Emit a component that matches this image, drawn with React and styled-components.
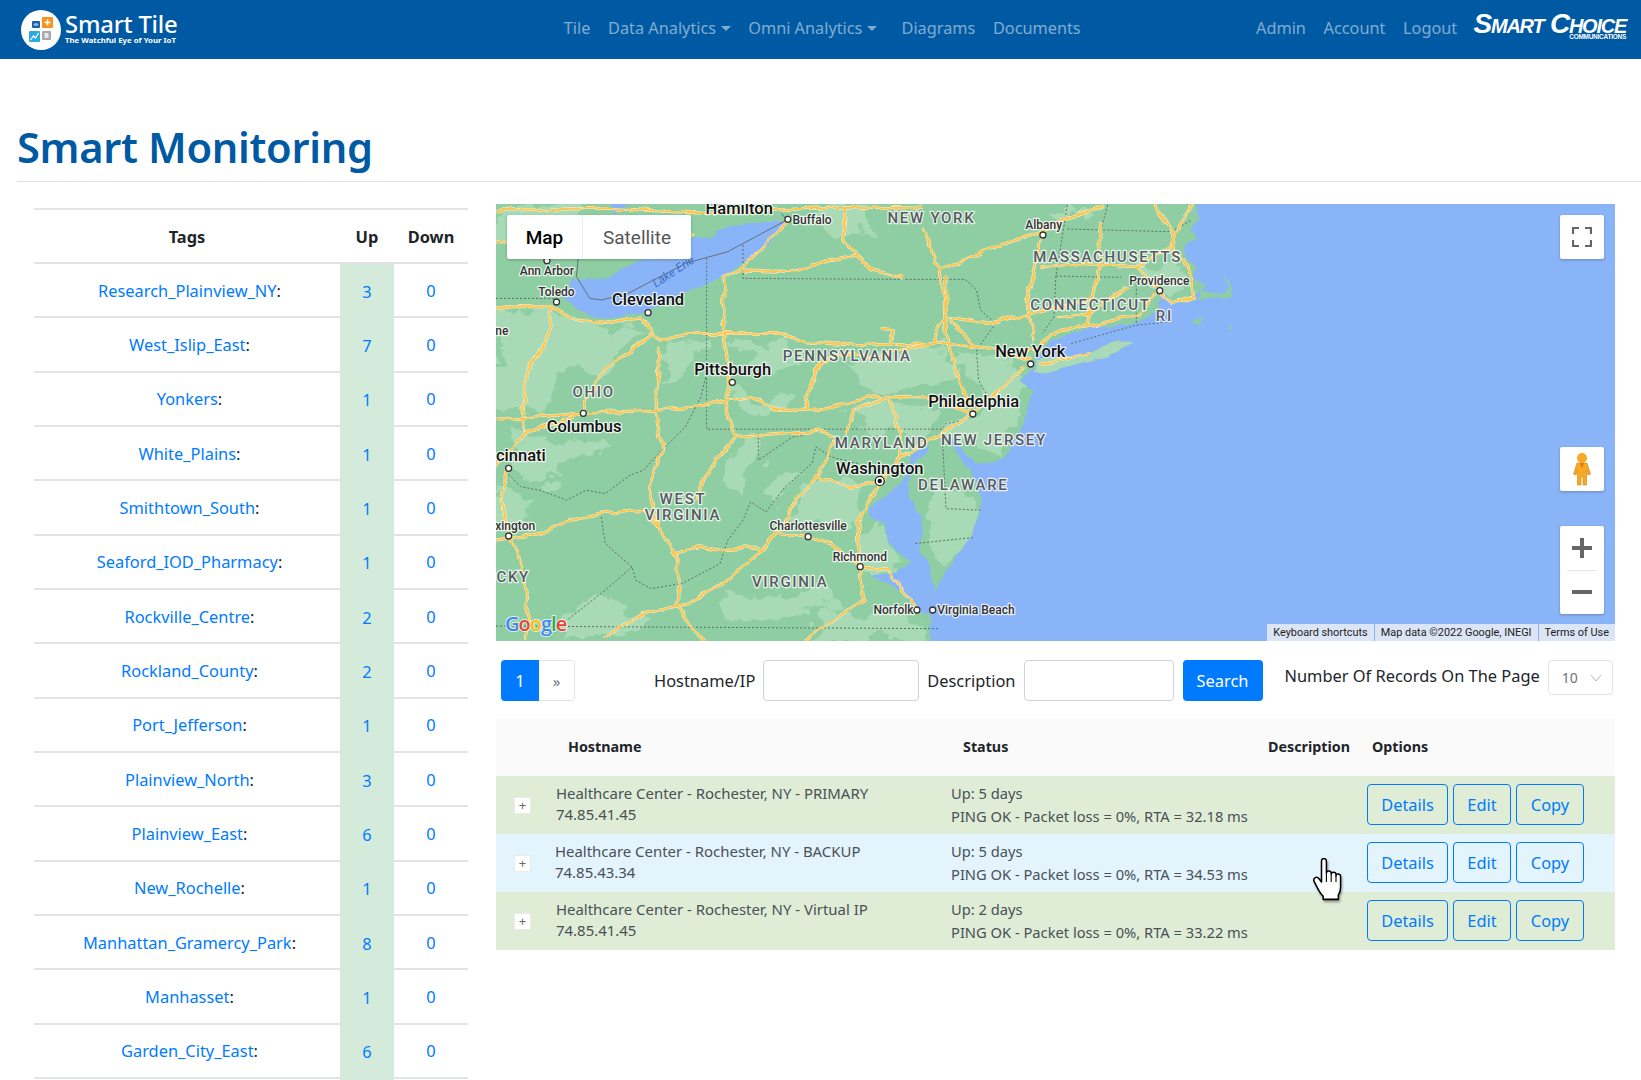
import styled, { createGlobalStyle } from "styled-components";

const GlobalStyle = createGlobalStyle`
  html, body {
    margin: 0;
    height: 1080px;
    overflow: hidden;
    background: #fff;
    font-family: "Noto Sans", "Open Sans", sans-serif;
    color: #212529;
  }
`;

const Navbar = styled.header`
  display: flex;
  align-items: center;
  height: 59px;
  padding: 0 15px 0 21px;
  background: #005aa3;
`;

const Brand = styled.div`
  display: flex;
  align-items: center;
  gap: 4px;
  width: 534px;
`;

const BrandText = styled.div`
  display: flex;
  flex-direction: column;
  margin-top: -5px;
  color: #fff;
  h2 {
    margin: 0;
    font-size: 23.8px;
    line-height: 27px;
    font-weight: 500;
    letter-spacing: -0.2px;
  }
  span {
    margin-top: -2px;
    font-size: 7.8px;
    line-height: 8px;
    font-weight: 700;
    white-space: nowrap;
  }
`;

const NavGroup = styled.nav`
  display: flex;
  align-items: center;
  margin-top: -4px;
  margin-left: ${props => (props.$right ? "auto" : "0")};
`;

const NavLink = styled.a`
  padding: 0 8.8px;
  margin-left: ${props => (props.$spaced ? "7px" : "0")};
  font-size: 16.3px;
  color: rgba(255, 255, 255, 0.5);
  white-space: nowrap;
  ${props =>
    props.$caret &&
    `&::after {
      content: "";
      display: inline-block;
      margin-left: 4.5px;
      vertical-align: 3px;
      border-top: 5px solid;
      border-left: 5px solid transparent;
      border-right: 5px solid transparent;
    }`}
`;

const PartnerLogo = styled.div`
  display: flex;
  flex-direction: column;
  align-items: flex-end;
  width: 156px;
  margin-left: 4px;
  margin-top: -9px;
  color: #fff;
  font-family: "Liberation Sans", sans-serif;
  font-style: italic;
  font-weight: 700;
  b {
    font-size: 28px;
    line-height: 26px;
    font-variant: small-caps;
    letter-spacing: -1.25px;
    white-space: nowrap;
  }
  span {
    margin-top: -4px;
    font-size: 6.4px;
    line-height: 7px;
    font-style: normal;
    letter-spacing: -0.2px;
  }
`;

const PageTitle = styled.h1`
  margin: 0 0 0 17px;
  padding: 62px 0 8px 0;
  border-bottom: 1px solid #dfdfdf;
  font-size: 41.6px;
  line-height: 52px;
  font-weight: 600;
  letter-spacing: -0.3px;
  color: #005aa3;
`;

const Content = styled.main`
  display: grid;
  grid-template-columns: 434px 1119px;
  column-gap: 28px;
  padding: 22px 0 0 34px;
`;

const TagsTable = styled.div`
  margin-top: 4px;
  border-top: 2px solid #e4e4e4;
`;

const TagRow = styled.div`
  display: grid;
  grid-template-columns: 306px 54px 74px;
  align-items: stretch;
  height: ${props => (props.$head ? "54px" : "54.35px")};
  border-bottom: 2px solid #e1e3e6;
  box-sizing: border-box;
`;

const TagHead = styled.div`
  display: flex;
  align-items: center;
  justify-content: center;
  font-size: 16.4px;
  font-weight: 700;
`;

const TagCell = styled.div`
  display: flex;
  align-items: center;
  justify-content: center;
  padding-left: ${props => (props.$name ? "5px" : "0")};
  font-size: 16.4px;
  color: #212529;
  background: ${props => (props.$up ? "#d4ebdb" : "transparent")};
  margin-bottom: ${props => (props.$up ? "-2px" : "0")};
  a {
    color: #007bff;
  }
`;

const MapPanel = styled.div`
  position: relative;
  height: 437px;
  overflow: hidden;
  background: #8ab4f8;
`;

const MapType = styled.div`
  position: absolute;
  top: 11px;
  left: 11px;
  display: flex;
  height: 44px;
  background: #fff;
  box-shadow: 0 1px 3px rgba(0, 0, 0, 0.25);
  border-radius: 2px;
`;

const MapTypeItem = styled.div`
  display: flex;
  align-items: center;
  justify-content: center;
  width: ${props => (props.$active ? "75px" : "108px")};
  font-family: Roboto, sans-serif;
  font-size: 19px;
  font-weight: ${props => (props.$active ? 500 : 400)};
  color: ${props => (props.$active ? "#000" : "#565656")};
  border-left: ${props => (props.$active ? "none" : "1px solid #eee")};
`;

const MapButton = styled.div`
  position: absolute;
  right: 11px;
  top: ${props => props.$top}px;
  width: 44px;
  height: ${props => props.$h || 44}px;
  display: flex;
  flex-direction: column;
  align-items: center;
  justify-content: center;
  background: #fff;
  border-radius: 2px;
  box-shadow: 0 1px 3px rgba(0, 0, 0, 0.25);
`;

const ZoomPart = styled.div`
  display: flex;
  align-items: center;
  justify-content: center;
  width: 100%;
  height: 44px;
  & + & {
    position: relative;
    &::before {
      content: "";
      position: absolute;
      top: 0;
      left: 7px;
      right: 7px;
      height: 1px;
      background: #e6e6e6;
    }
  }
`;

const MapFooter = styled.div`
  position: absolute;
  right: 0;
  bottom: 0;
  display: flex;
  gap: 1px;
  height: 17px;
`;

const MapFooterItem = styled.span`
  display: flex;
  align-items: center;
  padding: 0 6px;
  font-family: Roboto, sans-serif;
  font-size: 10.9px;
  color: #222;
  background: rgba(245, 245, 245, 0.75);
  white-space: nowrap;
`;

const Toolbar = styled.div`
  display: flex;
  align-items: flex-start;
  margin-top: 19px;
  height: 41px;
`;

const Pager = styled.div`
  display: flex;
  margin-left: 5px;
  width: 74px;
  height: 41px;
  border: 1px solid #e3e6e9;
  border-radius: 4px;
  box-sizing: border-box;
  margin-right: 79px;
`;

const PagerItem = styled.span`
  display: flex;
  align-items: center;
  justify-content: center;
  flex: ${props => (props.$active ? "0 0 38px" : "1")};
  margin: ${props => (props.$active ? "-1px 0 -1px -1px" : "0")};
  border-radius: ${props => (props.$active ? "4px 0 0 4px" : "0")};
  background: ${props => (props.$active ? "#007bff" : "transparent")};
  color: ${props => (props.$active ? "#fff" : "#6c757d")};
  font-size: ${props => (props.$active ? "16.4px" : "15px")};
`;

const FieldLabel = styled.label`
  font-size: 16.4px;
  line-height: 41px;
  margin-right: 8px;
  white-space: nowrap;
`;

const TextInput = styled.input`
  width: ${props => props.$w}px;
  height: 41px;
  margin-right: ${props => props.$mr || 0}px;
  padding: 0 12px;
  border: 1px solid #ced4da;
  border-radius: 4px;
  box-sizing: border-box;
  background: #fff;
`;

const SearchButton = styled.button`
  width: 80px;
  height: 41px;
  margin-right: 22px;
  border: none;
  border-radius: 4px;
  background: #007bff;
  color: #fff;
  font-family: inherit;
  font-size: 16.4px;
`;

const RecordsLabel = styled.span`
  font-size: 16.4px;
  line-height: 32px;
  margin-right: 8px;
  white-space: nowrap;
`;

const PageSize = styled.div`
  display: flex;
  align-items: center;
  justify-content: space-between;
  width: 65px;
  height: 35px;
  padding: 0 10px 0 13px;
  border: 1px solid #e2e5e8;
  border-radius: 4px;
  box-sizing: border-box;
  font-size: 14px;
  color: #6c757d;
`;

const HostTable = styled.div`
  position: relative;
  margin-top: 18px;
`;

const HostRow = styled.div`
  display: grid;
  grid-template-columns: 60px 395px 317px 99px 1fr;
  height: ${props => (props.$head ? "57px" : "58px")};
  align-items: center;
  background: ${props => props.$bg};
`;

const HostHead = styled.div`
  margin-top: -2px;
  padding-left: ${props => props.$pl || 0}px;
  font-size: 14.3px;
  font-weight: 700;
`;

const ExpandCell = styled.div`
  display: flex;
  justify-content: flex-start;
  padding-left: 18px;
`;

const ExpandButton = styled.span`
  display: flex;
  align-items: center;
  justify-content: center;
  width: 17px;
  height: 17px;
  background: #fff;
  border: 1px solid #eaeaea;
  box-sizing: border-box;
  font-size: 13px;
  color: #666;
`;

const HostName = styled.div`
  margin: -2px 0 0 ${props => props.$shift || 0}px;
  font-size: 14.95px;
  line-height: 21px;
  color: #495057;
  white-space: nowrap;
`;

const HostStatus = styled.div`
  margin-top: -1px;
  font-size: 14.7px;
  line-height: 23px;
  color: #495057;
  white-space: nowrap;
`;

const Options = styled.div`
  display: flex;
  gap: 5px;
  margin-top: -2px;
`;

const OptionButton = styled.button`
  width: ${props => props.$w}px;
  height: 41px;
  padding: 0;
  background: transparent;
  border: 1px solid #007bff;
  border-radius: 4px;
  color: #007bff;
  font-family: inherit;
  font-size: 16.4px;
`;

const Cursor = styled.svg`
  position: absolute;
  left: 816px;
  top: 139px;
  filter: drop-shadow(1px 2px 1px rgba(0, 0, 0, 0.35));
`;

const MapLabel = styled.text`
  font-family: Roboto, sans-serif;
  text-anchor: middle;
  dominant-baseline: central;
  paint-order: stroke;
  stroke: rgba(255, 255, 255, 0.8);
  stroke-width: 2.5px;
  stroke-linejoin: round;
  ${props => props.$kind === "big" && "font-size: 16.5px; font-weight: 500; fill: #111;"}
  ${props => props.$kind === "small" && "font-size: 12px; font-weight: 500; fill: #333;"}
  ${props =>
    props.$kind === "state" &&
    "font-size: 15px; font-weight: 500; letter-spacing: 1.7px; fill: #565b60;"}
`;

const tags = [
  ["Research_Plainview_NY", 3],
  ["West_Islip_East", 7],
  ["Yonkers", 1],
  ["White_Plains", 1],
  ["Smithtown_South", 1],
  ["Seaford_IOD_Pharmacy", 1],
  ["Rockville_Centre", 2],
  ["Rockland_County", 2],
  ["Port_Jefferson", 1],
  ["Plainview_North", 3],
  ["Plainview_East", 6],
  ["New_Rochelle", 1],
  ["Manhattan_Gramercy_Park", 8],
  ["Manhasset", 1],
  ["Garden_City_East", 6],
];

const hosts = [
  ["Healthcare Center - Rochester, NY - PRIMARY", "74.85.41.45", "Up: 5 days", "32.18", "#dfedd6", 0],
  ["Healthcare Center - Rochester, NY - BACKUP", "74.85.43.34", "Up: 5 days", "34.53", "#e3f4fd", -1],
  ["Healthcare Center - Rochester, NY - Virtual IP", "74.85.41.45", "Up: 2 days", "33.22", "#dfedd6", 0],
];

// map drawing, in a 15..2937 x 12..1322 grid taken off the reference
const landEdge =
  "-100,-100 1820,-100 1837,12 1855,50 1827,90 1847,110 1807,140 1817,170 1842,200 1837,240 1867,250 1847,300 1937,290 1937,265 1917,225 1927,265 1907,285 1857,270 1837,290 1832,305 1777,310 1762,280 1747,275 1742,330 1687,370 1557,385 1467,420 1427,470 1420,510 1380,540 1415,570 1400,640 1380,700 1345,770 1300,790 1270,790 1230,740 1195,700 1200,720 1230,780 1262,830 1280,880 1280,920 1255,1010 1220,1060 1190,1120 1160,1175 1150,1240 1150,1500 -100,1500";
const longIsland = "1427,480 1567,460 1627,425 1682,425 1607,470 1537,490 1457,515 1420,520";
const capeBits = ["1830,365 1865,350 1845,375", "1925,385 1935,375 1937,390"];
const bay =
  "1160,1175 1150,1100 1120,1050 1130,980 1125,950 1090,880 1100,800 1130,770 1150,740 1100,760 1085,830 1060,860 1030,890 985,930 990,950 1030,970 1040,1030 1100,1090 1050,1120 990,1125 1040,1150 1090,1190 1130,1240 1160,1240";
const lakeErie =
  "190,290 215,240 300,235 380,185 410,177 523,110 580,115 590,90 680,70 780,62 700,160 620,220 570,250 500,280 440,320 395,340 360,345 290,355 230,330";
const lakeHuron = "318,12 358,12 325,42";
const lightPatches = [
  "15,340 150,330 260,370 380,400 300,520 200,520 140,600 15,640",
  "60,700 180,720 280,730 230,800 130,850 60,820",
  "15,860 90,880 100,960 15,1000",
  "440,430 560,420 540,520 460,560 440,500",
  "640,420 780,420 830,500 760,520 680,500",
  "620,570 800,590 760,620 640,620",
  "940,480 1180,440 1220,520 1130,570 1000,570",
  "920,630 1050,600 1180,620 1150,680 950,680",
  "1210,450 1320,470 1390,530 1400,620 1370,700 1320,770 1240,720 1190,690 1280,620 1240,540",
  "1130,840 1260,850 1270,1000 1180,1100 1130,1000",
  "860,820 1000,860 950,960 840,960 780,950",
  "1000,960 1080,1080 1000,1120 960,1030",
  "200,1240 300,1200 420,1260 300,1322 170,1322",
  "620,1180 760,1200 880,1150 900,1220 760,1270 620,1260",
  "880,1230 1140,1250 1150,1322 830,1322",
  "1445,12 1560,12 1500,60",
  "1700,190 1820,190 1830,270 1770,300 1720,260",
  "1437,480 1567,460 1627,425 1682,425 1607,470 1537,490 1457,515",
  "15,12 240,12 220,130 15,140",
  "850,20 960,12 1000,100 900,110",
  "600,780 680,720 720,760 640,860",
  "700,880 780,800 820,830 740,920",
];
const borders = [
  "660,135 660,235 1080,238 1240,238 1270,270 1280,330 1320,370 1270,450 1275,540 1300,590",
  "565,175 565,687 1180,687 1190,670 1240,660",
  "565,520 550,590 510,680 440,760 400,810 365,825 300,880 250,870 200,900 130,870 80,860 45,820",
  "290,950 300,1030 370,1100 380,1140 420,1165 500,1150 600,1090 620,1020 660,960 680,905 720,935 770,860 840,790 850,740 890,770 960,790",
  "700,700 700,780 790,710 840,700",
  "370,1100 300,1170 200,1260",
  "15,1277 410,1280 1170,1285",
  "1180,700 1190,925 1280,930",
  "1110,1030 1150,1025 1260,1012",
  "1612,15 1597,80",
  "1507,87 1777,95 1832,60",
  "1507,15 1477,228 1472,350 1442,400",
  "1477,228 1647,232",
  "1687,230 1687,370",
  "1517,430 1687,375 1777,365",
  "15,295 170,295",
];
const roads = [
  "15,320 160,320 230,360 300,370 390,350 420,390 440,420 510,400 600,400 760,400 820,425 950,435 1020,430 1080,435 1150,425 1270,440 1340,450 1410,480",
  "15,660 230,640 430,630 550,620 610,600 680,590 750,630 860,630 1000,590 1130,590 1260,640",
  "610,600 640,710 860,690 900,710",
  "610,230 610,400 625,540 610,600",
  "640,710 590,780 545,860 540,900",
  "430,630 450,750 410,860 440,980 490,1080 490,1210 530,1290 560,1322",
  "15,1020 130,1000 210,960 300,940 400,930 440,980",
  "480,1060 550,1040 600,1050 690,1040 710,1050 750,1000 830,1010 890,1030 965,1100 1040,1110 1110,1220",
  "900,720 860,820 800,900 760,980 710,1050 620,1140 520,1210 400,1240 300,1310",
  "1400,500 1370,530 1260,640 1150,720 1070,770 1020,845 960,960 965,1100 975,1200 880,1270 820,1322",
  "240,640 250,600 300,510 390,430 420,400",
  "15,800 90,700 240,640",
  "45,805 30,880 45,1000 70,1050 100,1180 95,1322",
  "160,320 150,420 95,510 85,640 90,700",
  "430,630 440,520 440,440",
  "1190,230 1190,400 1210,500 1240,590 1260,640",
  "1130,80 1170,200 1190,340",
  "820,630 850,510 900,460 1000,470 1150,430 1190,350 1300,370 1450,330 1570,300",
  "780,60 660,200 610,235",
  "660,210 800,215 880,180 960,165 1000,210 1080,235",
  "1000,210 920,120 930,20",
  "1170,210 1300,150 1420,100 1500,60 1600,20",
  "1440,105 1400,300 1420,420",
  "1437,200 1547,190 1687,200 1777,140 1807,60 1837,12",
  "1737,12 1782,100 1787,160 1822,200 1837,290 1777,310 1747,270 1687,200",
  "1747,270 1697,340 1557,380 1467,400 1437,440 1387,450",
  "1592,70 1592,200 1567,330 1557,380",
  "1477,350 1557,340 1667,260",
  "1437,490 1567,460",
  "15,130 130,115 240,100",
  "360,170 450,130 530,100",
  "15,30 300,25 560,40 930,20 1130,25",
  "1040,590 1070,700 1070,770",
  "930,700 950,630 1040,590",
  "1270,440 1200,360",
  "850,825 930,860 1020,845",
  "1020,385 1050,390 1045,425",
];
const labels = [
  ["Hamilton", 650, 25, "big"],
  ["Buffalo", 840, 60, "small"],
  ["NEW YORK", 1152, 55, "state"],
  ["Albany", 1445, 75, "small"],
  ["MASSACHUSETTS", 1612, 172, "state"],
  ["Providence", 1747, 243, "small"],
  ["CONNECTICUT", 1567, 316, "state"],
  ["RI", 1760, 347, "state"],
  ["New York", 1410, 455, "big"],
  ["Philadelphia", 1262, 603, "big"],
  ["PENNSYLVANIA", 932, 467, "state"],
  ["Pittsburgh", 633, 508, "big"],
  ["OHIO", 270, 575, "state"],
  ["Columbus", 245, 680, "big"],
  ["Cleveland", 412, 297, "big"],
  ["Ann Arbor", 148, 213, "small"],
  ["Toledo", 173, 275, "small"],
  ["ne", 30, 392, "small"],
  ["cinnati", 80, 767, "big"],
  ["xington", 65, 978, "small"],
  ["CKY", 60, 1130, "state"],
  ["WEST", 503, 898, "state"],
  ["VIRGINIA", 503, 944, "state"],
  ["VIRGINIA", 783, 1147, "state"],
  ["MARYLAND", 1022, 728, "state"],
  ["NEW JERSEY", 1315, 720, "state"],
  ["Washington", 1017, 804, "big"],
  ["DELAWARE", 1235, 856, "state"],
  ["Charlottesville", 830, 979, "small"],
  ["Richmond", 965, 1070, "small"],
  ["Norfolk", 1053, 1230, "small"],
  ["Virginia Beach", 1268, 1230, "small"],
];
const towns = [
  [777, 58], [1443, 105], [1748, 272], [1411, 492], [1260, 642], [632, 547], [243, 640],
  [412, 338], [148, 182], [173, 306], [48, 805], [48, 1008], [830, 1010], [966, 1100],
  [1114, 1230], [1155, 1230],
];
const gridX = x => (x - 15) * 0.383;
const gridY = y => (y - 12) / 3;

const MapDrawing = () => (
  <svg width="1119" height="437" viewBox="0 0 1119 437" style={{ display: "block" }}>
    <svg x="0" y="0" width="1119" height="437" viewBox="15 12 2922 1310" preserveAspectRatio="none">
      <defs>
        <filter id="rough-coast" x="-5%" y="-5%" width="110%" height="110%">
          <feTurbulence type="fractalNoise" baseFrequency="0.03" numOctaves="3" seed="4" />
          <feDisplacementMap in="SourceGraphic" scale="16" xChannelSelector="R" yChannelSelector="G" />
        </filter>
        <filter id="rough-terrain" x="-10%" y="-10%" width="120%" height="120%">
          <feTurbulence type="fractalNoise" baseFrequency="0.012" numOctaves="4" seed="9" />
          <feDisplacementMap in="SourceGraphic" scale="110" xChannelSelector="R" yChannelSelector="G" />
          <feGaussianBlur stdDeviation="1.5" />
        </filter>
        <filter id="rough-road" x="-5%" y="-5%" width="110%" height="110%" filterUnits="userSpaceOnUse">
          <feTurbulence type="fractalNoise" baseFrequency="0.025" numOctaves="2" seed="2" />
          <feDisplacementMap in="SourceGraphic" scale="20" xChannelSelector="R" yChannelSelector="G" />
        </filter>
        <clipPath id="land-clip">
          <polygon points={landEdge} />
          <polygon points={longIsland} />
        </clipPath>
      </defs>
      <rect x="15" y="12" width="2922" height="1310" fill="#8ab4f8" />
      <g filter="url(#rough-coast)">
        <polygon points={landEdge} fill="#8fcea2" />
        <polygon points={longIsland} fill="#a8dab5" />
        {capeBits.map(p => (
          <polygon key={p} points={p} fill="#8fcea2" />
        ))}
      </g>
      <g clipPath="url(#land-clip)">
        <g filter="url(#rough-terrain)">
          {lightPatches.map(p => (
            <polygon key={p} points={p} fill="#a8dab5" />
          ))}
        </g>
      </g>
      <g filter="url(#rough-coast)">
        <polygon points={bay} fill="#8ab4f8" />
        <polygon points={lakeErie} fill="#8ab4f8" />
        <polygon points={lakeHuron} fill="#8ab4f8" />
      </g>
      {borders.map(p => (
        <polyline key={p} points={p} fill="none" stroke="#5b6f68" strokeWidth="1" strokeDasharray="2 2" vectorEffect="non-scaling-stroke" />
      ))}
      <polyline points="760,40 775,60 620,155 510,190 360,280 290,300 260,295 225,230 230,170" fill="none" stroke="#66707c" strokeWidth="1" vectorEffect="non-scaling-stroke" />
      <g filter="url(#rough-road)">
        {roads.map(p => (
          <polyline key={p} points={p} fill="none" stroke="#fff6d6" strokeWidth="3" strokeLinejoin="round" vectorEffect="non-scaling-stroke" />
        ))}
        {roads.map(p => (
          <polyline key={p + "c"} points={p} fill="none" stroke="#fdc44f" strokeWidth="2" strokeLinejoin="round" vectorEffect="non-scaling-stroke" />
        ))}
      </g>
    </svg>
    {towns.map(([x, y]) => (
      <circle key={x + "-" + y} cx={gridX(x)} cy={gridY(y)} r="3" fill="#fff" stroke="#333" strokeWidth="1.3" />
    ))}
    <circle cx={gridX(1017)} cy={gridY(843)} r="4.5" fill="#fff" stroke="#111" strokeWidth="1.2" />
    <circle cx={gridX(1017)} cy={gridY(843)} r="2.2" fill="#111" />
    {labels.map(([text, x, y, kind]) => (
      <MapLabel key={text + x} x={gridX(x)} y={gridY(y)} $kind={kind}>
        {text}
      </MapLabel>
    ))}
    <text x={gridX(478)} y={gridY(215)} transform={`rotate(-33 ${gridX(478)} ${gridY(215)})`} textAnchor="middle" fontFamily="Roboto, sans-serif" fontSize="12" fontStyle="italic" fill="#3f6fc4" dominantBaseline="central">
      Lake Erie
    </text>
    <text x="9" y="427" fontFamily="'Open Sans', sans-serif" fontSize="20" fontWeight="600" letterSpacing="-1" stroke="rgba(255,255,255,0.7)" strokeWidth="2" paintOrder="stroke">
      <tspan fill="#4285f4">G</tspan>
      <tspan fill="#ea4335">o</tspan>
      <tspan fill="#fbbc05">o</tspan>
      <tspan fill="#4285f4">g</tspan>
      <tspan fill="#34a853">l</tspan>
      <tspan fill="#ea4335">e</tspan>
    </text>
  </svg>
);

const LogoMark = () => (
  <svg width="40" height="40" viewBox="0 0 40 40">
    <circle cx="20" cy="20" r="20" fill="#fff" />
    <rect x="11" y="11" width="8" height="7" rx="1" fill="#1c5ea8" />
    <ellipse cx="15" cy="14.5" rx="2.6" ry="1.5" fill="#8db4dc" />
    <rect x="21" y="7" width="11" height="11" rx="1" fill="#f7931e" />
    <path d="M26.5 9.5v6M23.5 12.5h6" stroke="#fff" strokeWidth="1.6" />
    <rect x="8" y="21" width="11" height="11" rx="1" fill="#29abe2" />
    <path d="M9.5 30l3-4 2 2 3-5" fill="none" stroke="#fff" strokeWidth="1.2" />
    <rect x="21" y="21" width="9" height="9" rx="1" fill="#a7a9ac" />
    <rect x="23.5" y="23" width="4" height="5" fill="#e6e7e8" />
  </svg>
);

const HandCursor = () => (
  <Cursor width="31" height="43" viewBox="0 0 27 39.500">
    <path
      d="M8 3q0-2.500 2.200-2.500T12.500 3V14q0-2 2.200-2t2.200 2v1q0-2 2.200-2t2.200 2v1.500q0-1.800 2-1.800t2.200 2V27q0 4-2 7v4H9.500v-3Q7 33 4 27L1.200 21.500q-1-2.500 1-3.500t3.500 1L8 22Z"
      fill="#fff"
      stroke="#000"
      strokeWidth="1.400"
      strokeLinejoin="round"
    />
    <path d="M12.500 14v8M16.900 15v7M21.300 16.500v5.500" stroke="#000" strokeWidth="1" fill="none" />
  </Cursor>
);

const App = () => (
  <>
    <GlobalStyle />
    <Navbar>
      <Brand>
        <LogoMark />
        <BrandText>
          <h2>Smart Tile</h2>
          <span>The Watchful Eye of Your IoT</span>
        </BrandText>
      </Brand>
      <NavGroup>
        <NavLink>Tile</NavLink>
        <NavLink $caret>Data Analytics</NavLink>
        <NavLink $caret>Omni Analytics</NavLink>
        <NavLink $spaced>Diagrams</NavLink>
        <NavLink>Documents</NavLink>
      </NavGroup>
      <NavGroup $right>
        <NavLink>Admin</NavLink>
        <NavLink>Account</NavLink>
        <NavLink>Logout</NavLink>
      </NavGroup>
      <PartnerLogo>
        <b>Smart Choice</b>
        <span>COMMUNICATIONS</span>
      </PartnerLogo>
    </Navbar>
    <PageTitle>Smart Monitoring</PageTitle>
    <Content>
      <TagsTable>
        <TagRow $head>
          <TagHead>Tags</TagHead>
          <TagHead>Up</TagHead>
          <TagHead>Down</TagHead>
        </TagRow>
        {tags.map(([name, up]) => (
          <TagRow key={name}>
            <TagCell $name>
              <span>
                <a>{name}</a>:
              </span>
            </TagCell>
            <TagCell $up>
              <a>{up}</a>
            </TagCell>
            <TagCell>
              <a>0</a>
            </TagCell>
          </TagRow>
        ))}
        <TagRow>
          <TagCell />
          <TagCell $up />
          <TagCell />
        </TagRow>
      </TagsTable>
      <section>
        <MapPanel>
          <MapDrawing />
          <MapType>
            <MapTypeItem $active>Map</MapTypeItem>
            <MapTypeItem>Satellite</MapTypeItem>
          </MapType>
          <MapButton $top={11}>
            <svg width="20" height="20" viewBox="0 0 20 20" fill="none" stroke="#666" strokeWidth="2.200">
              <path d="M1 7V1h6M13 1h6v6M19 13v6h-6M7 19H1v-6" />
            </svg>
          </MapButton>
          <MapButton $top={243}>
            <svg width="20" height="34" viewBox="0 0 20 34">
              <circle cx="10" cy="6" r="5" fill="#f9a825" />
              <path d="M5 11h10l3.500 11-2.500 1-1.500-5v15h-3.500v-8h-2v8H5.500V18L4 23l-2.500-1Z" fill="#f9a825" stroke="#c98a10" strokeWidth="0.6" />
              <path d="M8 11l2 5 2-5" fill="#d9731a" />
            </svg>
          </MapButton>
          <MapButton $top={322} $h={88}>
            <ZoomPart>
              <svg width="20" height="20" viewBox="0 0 20 20" fill="#666">
                <path d="M8 0h4v8h8v4h-8v8H8v-8H0V8h8Z" />
              </svg>
            </ZoomPart>
            <ZoomPart>
              <svg width="20" height="4" viewBox="0 0 20 4" fill="#666">
                <rect width="20" height="4" />
              </svg>
            </ZoomPart>
          </MapButton>
          <MapFooter>
            <MapFooterItem>Keyboard shortcuts</MapFooterItem>
            <MapFooterItem>Map data ©2022 Google, INEGI</MapFooterItem>
            <MapFooterItem>Terms of Use</MapFooterItem>
          </MapFooter>
        </MapPanel>
        <Toolbar>
          <Pager>
            <PagerItem $active>1</PagerItem>
            <PagerItem>»</PagerItem>
          </Pager>
          <FieldLabel>Hostname/IP</FieldLabel>
          <TextInput $w={156} $mr={8} />
          <FieldLabel>Description</FieldLabel>
          <TextInput $w={150} $mr={9} />
          <SearchButton>Search</SearchButton>
          <RecordsLabel>Number Of Records On The Page</RecordsLabel>
          <PageSize>
            10
            <svg width="12" height="8" viewBox="0 0 12 8" fill="none" stroke="#b5bbc1" strokeWidth="1">
              <path d="M1 1l5 6 5-6" />
            </svg>
          </PageSize>
        </Toolbar>
        <HostTable>
          <HostRow $head $bg="#fafafa">
            <span />
            <HostHead $pl={12}>Hostname</HostHead>
            <HostHead $pl={12}>Status</HostHead>
            <HostHead>Description</HostHead>
            <HostHead $pl={5}>Options</HostHead>
          </HostRow>
          {hosts.map(([name, ip, up, rta, bg, shift]) => (
            <HostRow key={name} $bg={bg}>
              <ExpandCell>
                <ExpandButton>+</ExpandButton>
              </ExpandCell>
              <HostName $shift={shift}>
                {name}
                <br />
                {ip}
              </HostName>
              <HostStatus>
                {up}
                <br />
                PING OK - Packet loss = 0%, RTA = {rta} ms
              </HostStatus>
              <span />
              <Options>
                <OptionButton $w={81}>Details</OptionButton>
                <OptionButton $w={58}>Edit</OptionButton>
                <OptionButton $w={68}>Copy</OptionButton>
              </Options>
            </HostRow>
          ))}
          <HandCursor />
        </HostTable>
      </section>
    </Content>
  </>
);

export default App;
